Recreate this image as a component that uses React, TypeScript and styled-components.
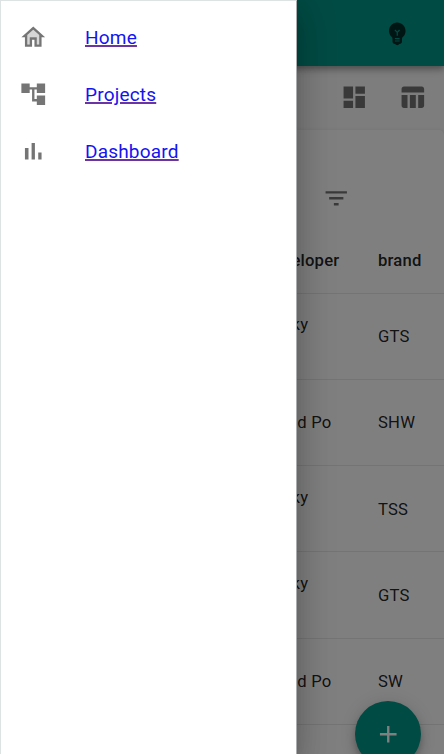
import React from "react";
import styled, { createGlobalStyle } from "styled-components";

const GlobalStyle = createGlobalStyle`
  * { box-sizing: border-box; }
  html, body { margin: 0; height: 100%; overflow: hidden; }
  body { background: #fafafa; font-family: Roboto, sans-serif; color: rgba(0, 0, 0, 0.87); }
`;

const Screen = styled.div`
  position: relative;
  width: 444px;
  height: 754px;
  overflow: hidden;
  display: flex;
  flex-direction: column;
`;

const AppBar = styled.header`
  flex: none;
  height: 66px;
  padding: 0 32.5px;
  display: flex;
  align-items: center;
  justify-content: flex-end;
  background: #009688;
  box-shadow: 0 2px 5px rgba(0, 0, 0, 0.2), 0 5px 6px rgba(0, 0, 0, 0.14), 0 1px 12px rgba(0, 0, 0, 0.12);
  z-index: 1;
`;

const ViewBar = styled.div`
  flex: none;
  height: 64px;
  padding: 0 18px 2px 0;
  display: flex;
  align-items: center;
  justify-content: flex-end;
  gap: 29px;
`;

const Icon = styled.svg<{ $color: string }>`
  display: block;
  flex: none;
  width: 28.5px;
  height: 28.5px;
  fill: ${(p) => p.$color};
`;

const Card = styled.main`
  flex: none;
  height: 700px;
  border-radius: 5px;
  background: #fff;
  box-shadow: 0 2px 1px -1px rgba(0, 0, 0, 0.2), 0 1px 1px rgba(0, 0, 0, 0.14), 0 1px 4px rgba(0, 0, 0, 0.12);
`;

const FilterBar = styled.div`
  height: 97px;
  padding: 54px 93.5px 0 0;
  display: flex;
  justify-content: flex-end;
`;

const Row = styled.div<{ $head?: boolean }>`
  height: ${(p) => (p.$head ? "66.6px" : "86.25px")};
  padding: 2px 0 0 264.5px;
  display: grid;
  grid-template-columns: 113.5px 1fr;
  align-items: center;
  border-bottom: 1px solid #e8e8e8;
  font-size: 16.67px;
  font-weight: ${(p) => (p.$head ? 500 : 400)};
  line-height: 24px;
  letter-spacing: 0.19px;
`;

const Cell = styled.div<{ $lines?: number }>`
  min-height: ${(p) => (p.$lines ?? 1) * 24}px;
  white-space: nowrap;
`;

const Fab = styled.button`
  position: absolute;
  left: 354.5px;
  top: 700.5px;
  width: 66.6px;
  height: 66.6px;
  padding: 0;
  border: 0;
  border-radius: 50%;
  display: flex;
  align-items: center;
  justify-content: center;
  background: #009688;
  box-shadow: 0 4px 6px -1px rgba(0, 0, 0, 0.2), 0 7px 12px rgba(0, 0, 0, 0.14), 0 1px 21px rgba(0, 0, 0, 0.12);
`;

const Backdrop = styled.div`
  position: absolute;
  inset: 0;
  z-index: 2;
  background: rgba(0, 0, 0, 0.5);
`;

const Drawer = styled.nav`
  position: absolute;
  left: 0;
  top: 0;
  z-index: 3;
  width: 297px;
  height: 754px;
  padding-top: 8px;
  background: #fff;
  border: solid #dde3e3;
  border-width: 1px 1px 0 1px;
  border-right-color: #a9adad;
  box-shadow: 0 9px 12px -6px rgba(0, 0, 0, 0.2), 0 19px 29px 2px rgba(0, 0, 0, 0.14), 0 7px 36px 6px rgba(0, 0, 0, 0.12);
`;

const NavItem = styled.div`
  height: 57px;
  padding-left: 18px;
  display: flex;
  align-items: center;
  gap: 37.5px;
`;

const NavLink = styled.a`
  padding-top: 2px;
  color: #1414f0;
  font-size: 19.05px;
  line-height: 28.5px;
  letter-spacing: 0.18px;
  text-decoration: underline;
  text-decoration-color: #6a35a0;
  text-decoration-thickness: 1.5px;
`;

const muted = "rgba(0, 0, 0, 0.54)";

const paths = {
  tree: "M22 11V3h-7v3H9V3H2v8h7V8h2v10h4v3h7v-8h-7v3h-2V8h2v3z",
  bars: "M5 9.2h3V19H5zM10.6 5h2.8v14h-2.8zm5.6 8H19v6h-2.8z",
  bulb: "M12 3c-.46 0-.93.04-1.4.14-2.76.53-4.96 2.76-5.48 5.52-.48 2.61.48 5.01 2.22 6.56.43.38.66.91.66 1.47V19c0 1.1.9 2 2 2h.28c.35.6.98 1 1.72 1s1.38-.4 1.72-1H14c1.1 0 2-.9 2-2v-2.31c0-.55.22-1.09.64-1.46C18.09 13.95 19 12.08 19 10c0-3.87-3.13-7-7-7zm2 16h-4v-1h4v1zm0-2h-4v-1h4v1zm-1.5-5.59V14h-1v-2.59L9.67 9.59l.71-.71L12 10.5l1.62-1.62.71.71-1.83 1.82z",
  board: "M3 13h8V3H3v10zm0 8h8v-6H3v6zm10 0h8V11h-8v10zm0-18v6h8V3h-8z",
  table: "M10 10.02h5V21h-5V10.02zM17 21h3c1.1 0 2-.9 2-2v-9h-5v11zm3-18H5c-1.1 0-2 .9-2 2v3h19V5c0-1.1-.9-2-2-2zM3 19c0 1.1.9 2 2 2h3V10H3v9z",
  filter: "M10 18h4v-2h-4v2zM3 6v2h18V6H3zm3 7h12v-2H6v2z",
  add: "M19 13h-6v6h-2v-6H5v-2h6V5h2v6h6v2z",
};

function Glyph({ name, color = muted }: { name: keyof typeof paths; color?: string }) {
  return (
    <Icon viewBox="0 0 24 24" $color={color}>
      <path d={paths[name]} />
    </Icon>
  );
}

const rows = [
  { developer: "Lucky", lines: 2, brand: "GTS" },
  { developer: "David Po", lines: 1, brand: "SHW" },
  { developer: "Lucky", lines: 2, brand: "TSS" },
  { developer: "Lucky", lines: 2, brand: "GTS" },
  { developer: "David Po", lines: 1, brand: "SW" },
];

export default function App() {
  return (
    <Screen>
      <GlobalStyle />
      <AppBar>
        <Glyph name="bulb" color="rgba(0, 0, 0, 0.7)" />
      </AppBar>
      <ViewBar>
        <Glyph name="board" />
        <Glyph name="table" />
      </ViewBar>
      <Card>
        <FilterBar>
          <Glyph name="filter" />
        </FilterBar>
        <Row $head>
          <Cell>developer</Cell>
          <Cell>brand</Cell>
        </Row>
        {rows.map((row, i) => (
          <Row key={i}>
            <Cell $lines={row.lines}>{row.developer}</Cell>
            <Cell>{row.brand}</Cell>
          </Row>
        ))}
      </Card>
      <Fab aria-label="Add">
        <Glyph name="add" color="#fff" />
      </Fab>
      <Backdrop />
      <Drawer>
        <NavItem>
          <Icon viewBox="0 0 24 24" $color={muted}>
            <path opacity=".3" d="M7 10.19V18h2v-6h6v6h2v-7.81l-5-4.5z" />
            <path d="M12 3 2 12h3v8h6v-6h2v6h6v-8h3L12 3zm5 15h-2v-6H9v6H7v-7.81l5-4.5 5 4.5V18z" />
          </Icon>
          <NavLink href="#">Home</NavLink>
        </NavItem>
        <NavItem>
          <Glyph name="tree" />
          <NavLink href="#">Projects</NavLink>
        </NavItem>
        <NavItem>
          <Glyph name="bars" />
          <NavLink href="#">Dashboard</NavLink>
        </NavItem>
      </Drawer>
    </Screen>
  );
}
